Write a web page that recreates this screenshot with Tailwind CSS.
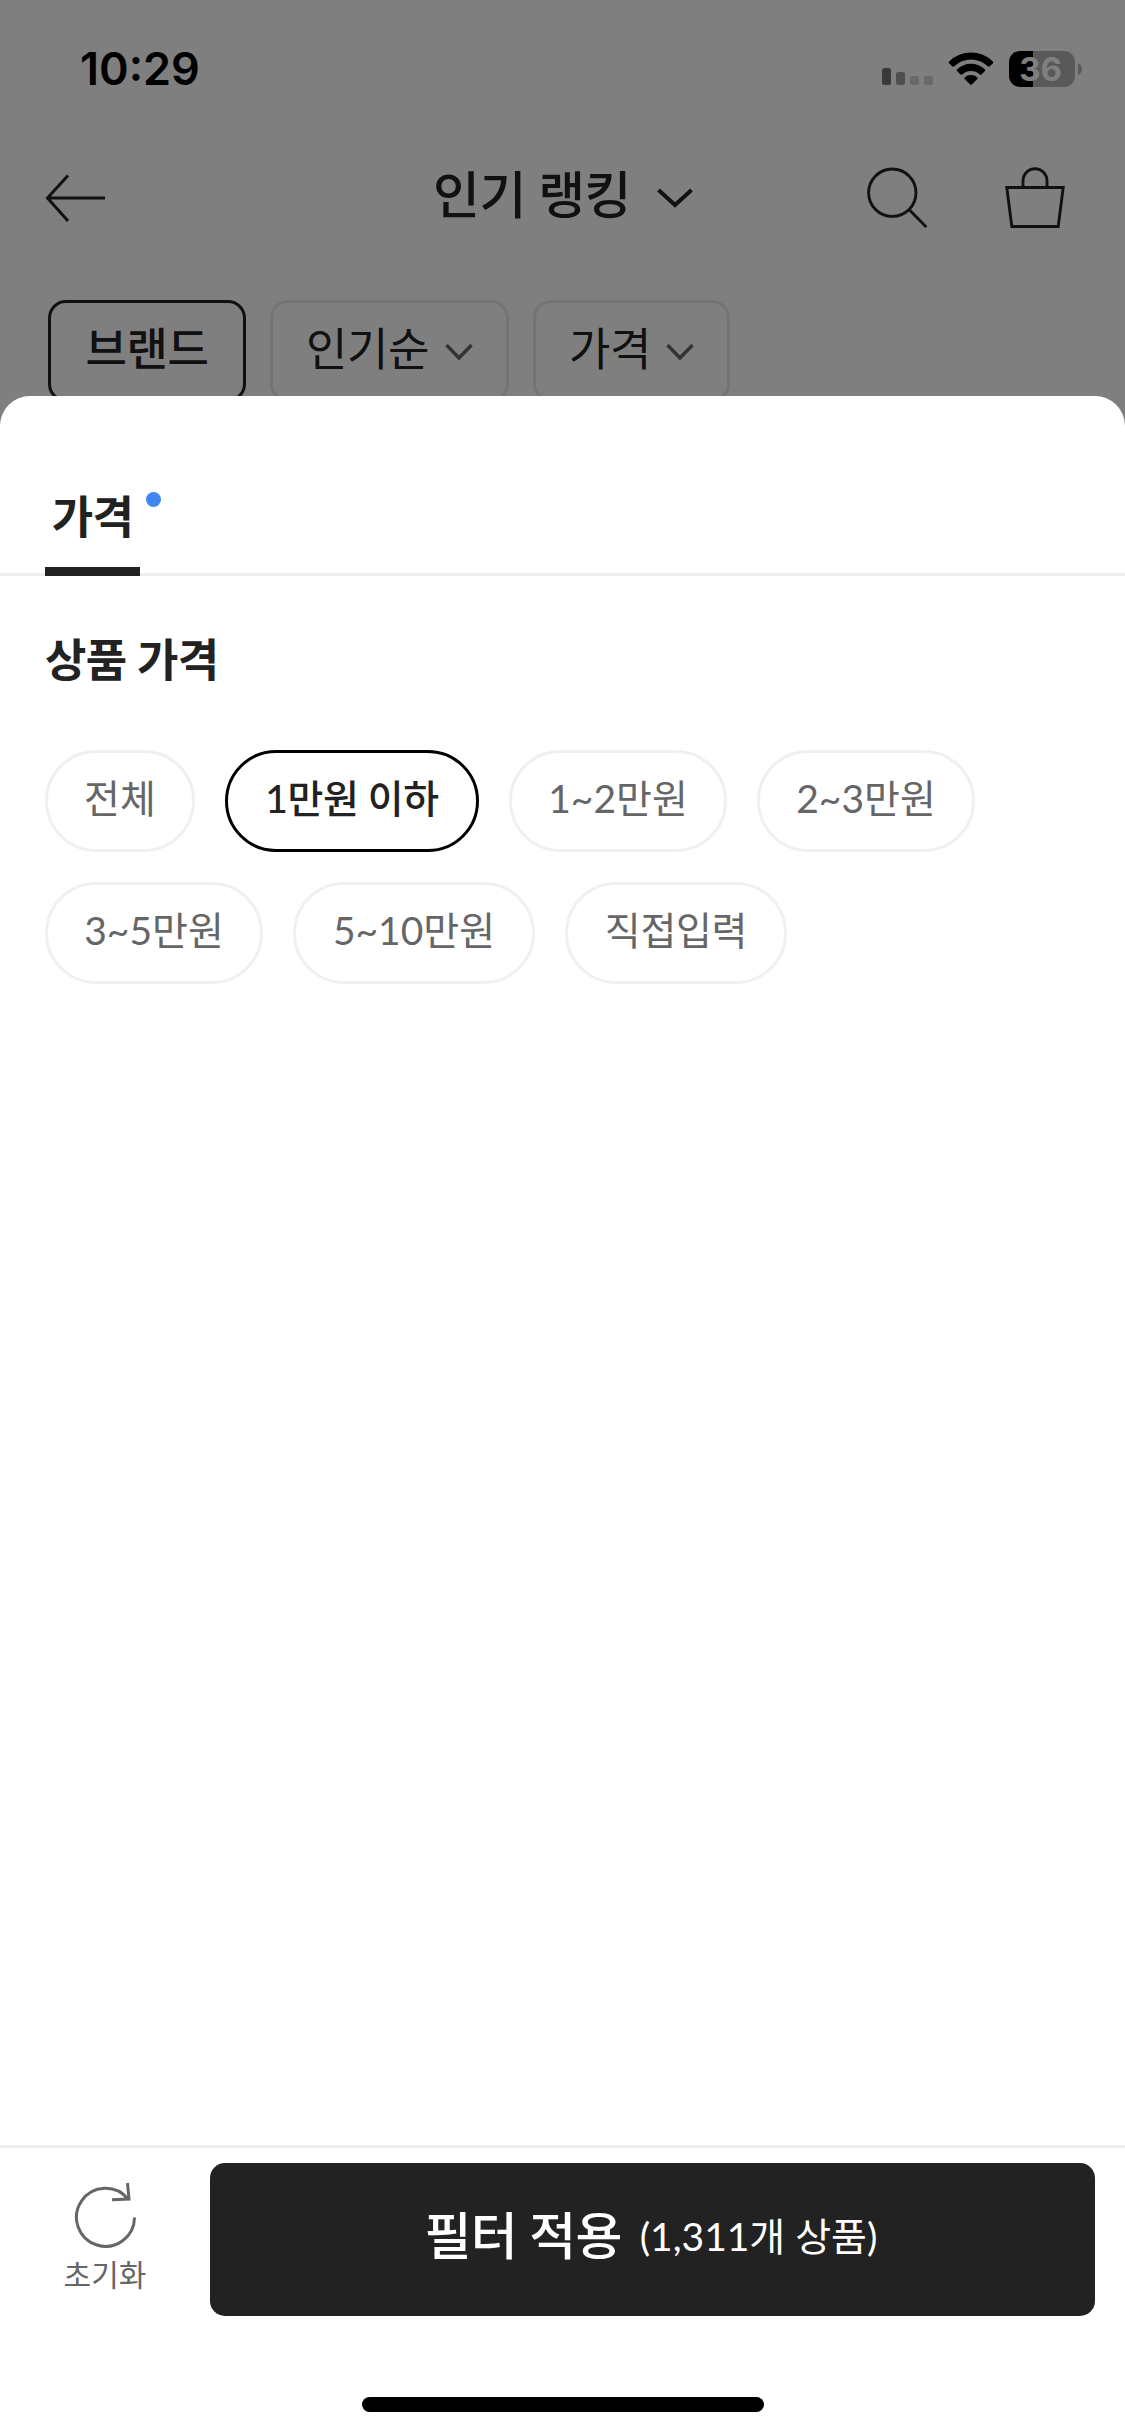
<!DOCTYPE html>
<html lang="ko">
<head>
<meta charset="utf-8">
<title>인기 랭킹</title>
<script src="https://cdn.jsdelivr.net/npm/@tailwindcss/browser@4"></script>
</head>
<body class="w-[1125px] h-[2436px] overflow-hidden bg-white text-[#222] font-['Lato','Noto_Sans_CJK_KR',sans-serif] flex flex-col">

<div class="relative h-[426px] shrink-0 overflow-hidden bg-white">
  <!-- status bar -->
  <div class="h-[138px] flex items-center justify-between pl-[80px] pr-[43px] text-black">
    <div class="font-['Inter',sans-serif] font-semibold text-[45px] leading-[54px]">10:29</div>
    <div class="flex items-center">
      <svg class="w-[51px] h-[36px]" viewBox="0 0 51 36">
        <rect x="0" y="17" width="9" height="17" rx="2.5" fill="#747474"/>
        <rect x="14" y="21" width="9" height="13" rx="2.5" fill="#9c9c9c"/>
        <rect x="28" y="25" width="9" height="9" rx="2.5" fill="#d2d2d2"/>
        <rect x="42" y="25" width="9" height="9" rx="2.5" fill="#d2d2d2"/>
      </svg>
      <svg class="w-[46px] h-[36px] ml-[15px]" viewBox="0 0 46 36">
        <path d="M1.2 10.4 A31 31 0 0 1 44.8 10.4 Q45.8 11.4 44.8 12.4 L41.4 15.4 Q40.6 16 39.8 15.2 A24.4 24.4 0 0 0 6.2 15.2 Q5.4 16 4.6 15.4 L1.2 12.4 Q.2 11.4 1.2 10.4Z"/>
        <path d="M9 18.4 A20 20 0 0 1 37 18.4 Q37.7 19.3 37 20 L33.4 23.4 Q32.6 24 31.8 23.4 A13.2 13.2 0 0 0 14.2 23.4 Q13.4 24 12.6 23.4 L9 20 Q8.3 19.3 9 18.4Z"/>
        <path d="M16.6 26.5 A9.5 9.5 0 0 1 29.4 26.5 Q30 27.3 29.4 28 L23.8 33.5 Q23 34.2 22.2 33.5 L16.6 28 Q16 27.3 16.6 26.5Z"/>
      </svg>
      <div class="relative ml-[15px] w-[66px] h-[36px] rounded-[11px] bg-linear-to-r from-black from-[24px] to-[#b2b2b2] to-[24px] text-center pr-[3px] font-['Inter',sans-serif] font-bold text-[33px] leading-[36px] text-white">36</div>
      <svg class="w-[4px] h-[12px] ml-[3px]" viewBox="0 0 4 12"><path d="M0 0 Q4 2 4 6 T0 12Z" fill="#b2b2b2"/></svg>
    </div>
  </div>
  <!-- header -->
  <div class="h-[120px] grid grid-cols-[1fr_auto_1fr] items-center pl-[61px] pr-[60px]">
    <svg class="w-[60px] h-[60px] -ml-[16px]" viewBox="0 0 60 60" fill="none" stroke="#222" stroke-width="3"><path d="M60 30H2M23 7.500L2.500 30L23 53"/></svg>
    <div class="flex items-center">
      <div class="text-[51px] leading-[60px] font-medium -mt-[6px] tracking-[-0.5px]">인기 랭킹</div>
      <svg class="w-[36px] h-[20px] ml-[26px]" viewBox="0 0 36 20" fill="none" stroke="#222" stroke-width="4"><path d="M1.500 2L18 17L34.500 2"/></svg>
    </div>
    <div class="flex justify-end">
      <svg class="w-[60px] h-[62px]" viewBox="0 0 60 62" fill="none" stroke="#222" stroke-width="2.900"><circle cx="25.300" cy="25.700" r="23.700"/><path d="M42 42.500L59.300 60"/></svg>
      <svg class="w-[60px] h-[62px] ml-[78px]" viewBox="0 0 60 62" fill="none" stroke="#222" stroke-width="2.900"><path d="M1.800 20.500H58.200L53.200 59.500H6.800ZM18 20.500V14A12 12.300 0 0 1 42 14V20.500"/></svg>
    </div>
  </div>
  <!-- filter chips -->
  <div class="flex gap-[24px] pl-[48px] pt-[42px] text-[45px] leading-[54px] tracking-[-0.4px]">
    <div class="w-[198px] h-[102px] border-3 border-[#222] rounded-[18px] flex items-center justify-center font-medium pb-[5px]">브랜드</div>
    <div class="w-[239px] h-[102px] border-3 border-[#e9e9e9] rounded-[18px] flex items-center pl-[33px] pb-[5px]">인기순
      <svg class="w-[28px] h-[18px] ml-[16px] mt-[6px]" viewBox="0 0 28 18" fill="none" stroke="#666" stroke-width="3.500"><path d="M1.500 2L14 15L26.500 2"/></svg></div>
    <div class="w-[197px] h-[102px] border-3 border-[#e9e9e9] rounded-[18px] flex items-center pl-[33px] pb-[5px]">가격
      <svg class="w-[28px] h-[18px] ml-[15px] mt-[6px]" viewBox="0 0 28 18" fill="none" stroke="#666" stroke-width="3.500"><path d="M1.500 2L14 15L26.500 2"/></svg></div>
  </div>
  <div class="absolute inset-0 bg-black/50"></div>
</div>

<!-- bottom sheet -->
<div class="relative -mt-[30px] flex-1 flex flex-col bg-white rounded-t-[30px]">
  <div class="h-[180px] border-b-3 border-[#eee] px-[45px] flex items-end">
    <div class="relative w-[95px] h-[93px] -mb-[3px] pt-[7px] border-b-9 border-[#222] text-center text-[45px] leading-[54px] font-bold tracking-[-0.7px]">가격
      <span class="absolute left-[101px] top-[9px] size-[15px] rounded-full bg-[#4285f4]"></span>
    </div>
  </div>
  <div class="px-[45px] flex-1">
    <div class="pt-[57px] text-[45px] leading-[54px] font-bold tracking-[-0.6px]">상품 가격</div>
    <div class="mt-[63px] flex flex-wrap gap-[30px] text-[39px] leading-[48px] text-[#666] text-center">
      <div class="w-[150px] h-[102px] pb-[7px] border-3 border-[#f0f0f0] rounded-full flex items-center justify-center">전체</div>
      <div class="w-[254px] h-[102px] pb-[7px] border-3 border-black rounded-full flex items-center justify-center font-medium text-[#222] tracking-[-0.4px]">1만원 이하</div>
      <div class="w-[218px] h-[102px] pb-[7px] border-3 border-[#f0f0f0] rounded-full flex items-center justify-center">1~2만원</div>
      <div class="w-[218px] h-[102px] pb-[7px] border-3 border-[#f0f0f0] rounded-full flex items-center justify-center">2~3만원</div>
      <div class="w-[218px] h-[102px] pb-[7px] border-3 border-[#f0f0f0] rounded-full flex items-center justify-center">3~5만원</div>
      <div class="w-[242px] h-[102px] pb-[7px] border-3 border-[#f0f0f0] rounded-full flex items-center justify-center">5~10만원</div>
      <div class="w-[222px] h-[102px] pb-[7px] border-3 border-[#f0f0f0] rounded-full flex items-center justify-center tracking-[-0.3px]">직접입력</div>
    </div>
  </div>
  <div class="h-[291px] border-t-3 border-[#eee] flex flex-col items-center">
    <div class="w-full pt-[15px] pr-[30px] flex">
      <div class="w-[210px] h-[153px] flex flex-col items-center text-[#666]">
        <svg class="w-[66px] h-[70px] mt-[18px]" viewBox="0 0 66 70" fill="none" stroke="#666" stroke-width="3"><path d="M62.500 36.500A29 29 0 1 1 56 18M55.500 2L57 18L40 18.700"/></svg>
        <div class="text-[30px] leading-[36px] mt-[5px]">초기화</div>
      </div>
      <div class="flex-1 h-[153px] pb-[7px] pr-[3px] rounded-[15px] bg-[#222] text-white flex items-center justify-center">
        <span class="text-[51px] leading-[60px] font-medium tracking-[-0.7px]">필터 적용</span>
        <span class="text-[39px] leading-[48px] ml-[18px]">(1,311개 상품)</span>
      </div>
    </div>
    <div class="mt-[81px] w-[402px] h-[15px] rounded-full bg-black"></div>
  </div>
</div>
</body>
</html>
